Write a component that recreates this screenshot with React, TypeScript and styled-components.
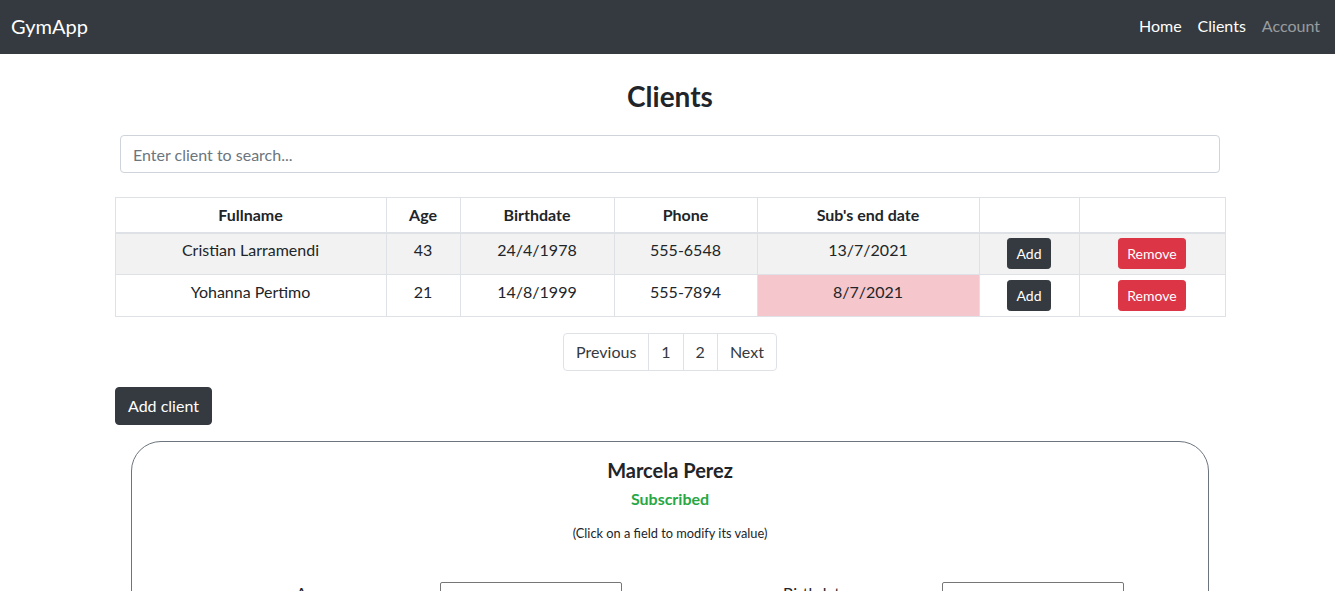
import React from "react";
import styled, { createGlobalStyle } from "styled-components";

const GlobalStyle = createGlobalStyle`
  html, body { margin: 0; padding: 0; overflow: hidden; }
  body {
    font-family: Lato, "Noto Sans", "Liberation Sans", sans-serif;
    font-size: 16px;
    line-height: 1.5;
    color: #212529;
    background: #fff;
  }
  * { box-sizing: border-box; }
`;

const Navbar = styled.nav`
  height: 54px;
  background: #343a40;
  display: flex;
  align-items: center;
  justify-content: space-between;
  padding: 0 15px 2px 11px;
`;

const Brand = styled.a`
  color: #fff;
  font-size: 20px;
  line-height: 30px;
  text-decoration: none;
`;

const NavLinks = styled.div`
  display: flex;
  gap: 16px;
`;

const NavLink = styled.a<{ $muted?: boolean }>`
  color: ${(p) => (p.$muted ? "rgba(255,255,255,0.5)" : "#fff")};
  font-size: 16px;
  line-height: 24px;
  text-decoration: none;
`;

const Main = styled.main`
  padding-left: 5px;
  display: flex;
  flex-direction: column;
  align-items: center;
`;

const Title = styled.h2`
  margin: 25px 0 0;
  font-size: 28px;
  font-weight: 700;
  line-height: 34px;
`;

const Search = styled.input`
  margin-top: 22px;
  width: 1100px;
  height: 38px;
  border: 1px solid #ced4da;
  border-radius: 4px;
  padding: 6px 12px;
  font: inherit;
  color: #495057;
  &::placeholder { color: #6c757d; }
`;

const Table = styled.table`
  margin-top: 24px;
  width: 1110px;
  border-collapse: collapse;
  table-layout: fixed;
  text-align: center;
`;

const Th = styled.th`
  border: 1px solid #dee2e6;
  border-bottom: 2px solid #dee2e6;
  padding: 4.8px;
  font-weight: 700;
  line-height: 24px;
  vertical-align: bottom;
`;

const Row = styled.tr<{ $striped?: boolean }>`
  background: ${(p) => (p.$striped ? "#f2f2f2" : "#fff")};
`;

const Td = styled.td<{ $danger?: boolean }>`
  border: 1px solid #dee2e6;
  padding: 4.8px;
  line-height: 24px;
  vertical-align: top;
  background: ${(p) => (p.$danger ? "#f5c6cb" : "transparent")};
`;

const SmallButton = styled.button<{ $variant: "dark" | "danger" }>`
  background: ${(p) => (p.$variant === "dark" ? "#343a40" : "#dc3545")};
  border: 1px solid ${(p) => (p.$variant === "dark" ? "#343a40" : "#dc3545")};
  color: #fff;
  font-family: inherit;
  font-size: 14px;
  line-height: 21px;
  padding: 4px 8px;
  border-radius: 3.2px;
  cursor: pointer;
`;

const Pagination = styled.ul`
  list-style: none;
  display: flex;
  margin: 16px 0 0;
  padding: 0;
`;

const PageItem = styled.li`
  border: 1px solid #dee2e6;
  margin-left: -1px;
  padding: 8px 12px;
  line-height: 20px;
  color: #343a40;
  &:first-child { margin-left: 0; border-radius: 4px 0 0 4px; }
  &:last-child { border-radius: 0 4px 4px 0; }
`;

const ActionBar = styled.div`
  width: 1110px;
  margin-top: 16px;
`;

const PrimaryButton = styled.button`
  background: #343a40;
  border: 1px solid #343a40;
  color: #fff;
  font-family: inherit;
  font-size: 16px;
  line-height: 24px;
  padding: 6px 12px;
  border-radius: 4px;
`;

const Card = styled.section`
  margin-top: 16px;
  width: 1078px;
  border: 1px solid #6c757d;
  border-radius: 30px;
  padding: 16px 0 60px;
  text-align: center;
`;

const Name = styled.h4`
  margin: 0 0 5px;
  font-size: 20px;
  font-weight: 700;
  line-height: 24px;
`;

const Status = styled.div`
  color: #28a745;
  font-weight: 700;
  line-height: 24px;
`;

const Hint = styled.p`
  margin: 13px 0 0;
  font-size: 12.8px;
  line-height: 19px;
`;

const FieldRow = styled.div`
  margin-top: 39px;
  padding-left: 164px;
  display: flex;
  gap: 161px;
`;

const Field = styled.label<{ $labelWidth: number }>`
  display: grid;
  grid-template-columns: ${(p) => p.$labelWidth}px 182px;
  align-items: start;
  text-align: left;
`;

const FieldLabel = styled.span`
  line-height: 22px;
`;

const FieldInput = styled.input`
  height: 28px;
  border: 1px solid #767676;
  border-radius: 2px;
  font: inherit;
`;

const clients = [
  { name: "Cristian Larramendi", age: 43, birth: "24/4/1978", phone: "555-6548", end: "13/7/2021", expired: false },
  { name: "Yohanna Pertimo", age: 21, birth: "14/8/1999", phone: "555-7894", end: "8/7/2021", expired: true },
];

const widths = [271, 74, 154, 143, 222, 100, 146];

export default function App() {
  return (
    <>
      <GlobalStyle />
      <Navbar>
        <Brand href="#">GymApp</Brand>
        <NavLinks>
          <NavLink href="#">Home</NavLink>
          <NavLink href="#">Clients</NavLink>
          <NavLink href="#" $muted>Account</NavLink>
        </NavLinks>
      </Navbar>
      <Main>
        <Title>Clients</Title>
        <Search placeholder="Enter client to search..." />
        <Table>
          <colgroup>
            {widths.map((w, i) => (
              <col key={i} style={{ width: w }} />
            ))}
          </colgroup>
          <thead>
            <tr>
              <Th>Fullname</Th>
              <Th>Age</Th>
              <Th>Birthdate</Th>
              <Th>Phone</Th>
              <Th>Sub's end date</Th>
              <Th></Th>
              <Th></Th>
            </tr>
          </thead>
          <tbody>
            {clients.map((c, i) => (
              <Row key={c.name} $striped={i % 2 === 0}>
                <Td>{c.name}</Td>
                <Td>{c.age}</Td>
                <Td>{c.birth}</Td>
                <Td>{c.phone}</Td>
                <Td $danger={c.expired}>{c.end}</Td>
                <Td>
                  <SmallButton $variant="dark">Add</SmallButton>
                </Td>
                <Td>
                  <SmallButton $variant="danger">Remove</SmallButton>
                </Td>
              </Row>
            ))}
          </tbody>
        </Table>
        <Pagination>
          <PageItem>Previous</PageItem>
          <PageItem>1</PageItem>
          <PageItem>2</PageItem>
          <PageItem>Next</PageItem>
        </Pagination>
        <ActionBar>
          <PrimaryButton>Add client</PrimaryButton>
        </ActionBar>
        <Card>
          <Name>Marcela Perez</Name>
          <Status>Subscribed</Status>
          <Hint>(Click on a field to modify its value)</Hint>
          <FieldRow>
            <Field $labelWidth={144}>
              <FieldLabel>Age</FieldLabel>
              <FieldInput defaultValue="" />
            </Field>
            <Field $labelWidth={159}>
              <FieldLabel>Birthdate</FieldLabel>
              <FieldInput defaultValue="" />
            </Field>
          </FieldRow>
        </Card>
      </Main>
    </>
  );
}
